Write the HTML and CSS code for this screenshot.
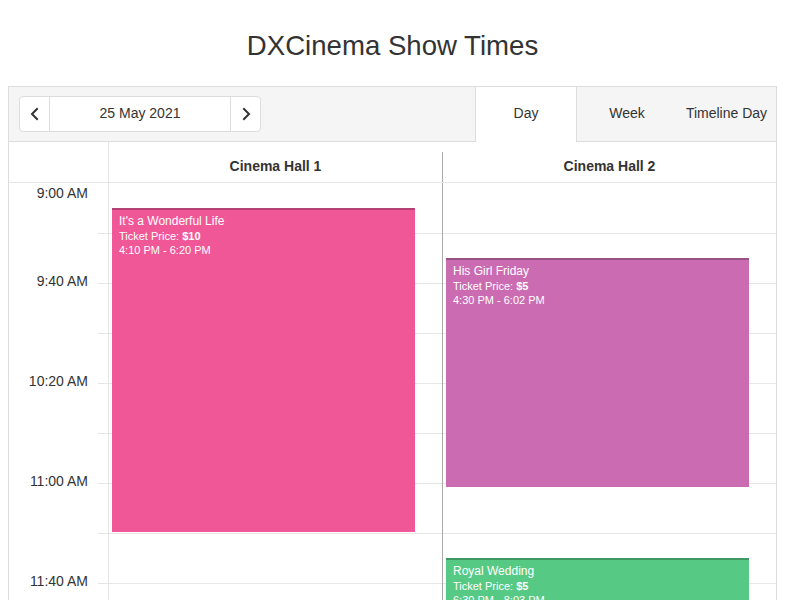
FILE: index.html
```html
<!DOCTYPE html>
<html>
<head>
<meta charset="utf-8">
<title>DXCinema Show Times</title>
<link rel="stylesheet" href="styles.css">
</head>
<body>
<h1 class="title">DXCinema Show Times</h1>
<div class="scheduler">
  <div class="toolbar">
    <div class="navigator">
      <button class="nav-btn nav-prev" aria-label="Previous">
        <svg width="12" height="14" viewBox="0 0 12 14"><path d="M8 2 L3 7 L8 12" fill="none" stroke="#333" stroke-width="2" stroke-linecap="square"/></svg>
      </button>
      <div class="nav-caption">25 May 2021</div>
      <button class="nav-btn nav-next" aria-label="Next">
        <svg width="12" height="14" viewBox="0 0 12 14"><path d="M4 2 L9 7 L4 12" fill="none" stroke="#333" stroke-width="2" stroke-linecap="square"/></svg>
      </button>
    </div>
    <div class="views">
      <div class="view view-active">Day</div>
      <div class="view">Week</div>
      <div class="view view-last">Timeline Day</div>
    </div>
  </div>
  <div class="header">
    <div class="corner"></div>
    <div class="groups">
      <div class="group">Cinema Hall 1</div>
      <div class="group group-sep">Cinema Hall 2</div>
    </div>
  </div>
  <div class="grid">
    <div class="time-panel">
      <div class="time-cell"><span class="time-label time-first">9:00 AM</span></div>
      <div class="time-cell tick"></div>
      <div class="time-cell tick"><span class="time-label">9:40 AM</span></div>
      <div class="time-cell tick"></div>
      <div class="time-cell tick"><span class="time-label">10:20 AM</span></div>
      <div class="time-cell tick"></div>
      <div class="time-cell tick"><span class="time-label">11:00 AM</span></div>
      <div class="time-cell tick"></div>
      <div class="time-cell tick"><span class="time-label">11:40 AM</span></div>
    </div>
    <div class="column">
      <div class="cell"></div><div class="cell"></div><div class="cell"></div>
      <div class="cell"></div><div class="cell"></div><div class="cell"></div>
      <div class="cell"></div><div class="cell"></div><div class="cell"></div>
      <div class="appt appt-pink" style="top:25px;height:324px">
        <div class="appt-title">It's a Wonderful Life</div>
        <div class="appt-line">Ticket Price: <b>$10</b></div>
        <div class="appt-line">4:10 PM - 6:20 PM</div>
      </div>
    </div>
    <div class="column column-sep">
      <div class="cell"></div><div class="cell"></div><div class="cell"></div>
      <div class="cell"></div><div class="cell"></div><div class="cell"></div>
      <div class="cell"></div><div class="cell"></div><div class="cell"></div>
      <div class="appt appt-purple" style="top:75px;height:229px">
        <div class="appt-title">His Girl Friday</div>
        <div class="appt-line">Ticket Price: <b>$5</b></div>
        <div class="appt-line">4:30 PM - 6:02 PM</div>
      </div>
      <div class="appt appt-green" style="top:375px;height:230px">
        <div class="appt-title">Royal Wedding</div>
        <div class="appt-line">Ticket Price: <b>$5</b></div>
        <div class="appt-line">6:30 PM - 8:03 PM</div>
      </div>
    </div>
  </div>
</div>
</body>
</html>
```

FILE: styles.css
```css
html, body {
  overflow: hidden;
}
body {
  margin: 0;
  padding: 0 8px;
  font-family: "Liberation Sans", Arial, sans-serif;
  color: #333;
  background: #fff;
}
.title {
  margin: 0;
  padding-top: 30px;
  height: 32px;
  margin-bottom: 24px;
  font-size: 27.6px;
  line-height: 32px;
  font-weight: normal;
  text-align: center;
  color: #333;
}
.scheduler {
  border: 1px solid #ddd;
  border-bottom: none;
  font-size: 14px;
}
.toolbar {
  display: flex;
  justify-content: space-between;
  height: 54px;
  background: #f5f5f5;
  border-bottom: 1px solid #ddd;
}
.navigator {
  display: flex;
  margin: 9px 0 0 10px;
  height: 34px;
  border: 1px solid #ddd;
  border-radius: 4px;
  background: #fff;
}
.nav-btn {
  width: 30px;
  padding: 0;
  margin: 0;
  border: none;
  background: transparent;
  display: flex;
  align-items: center;
  justify-content: center;
}
.nav-prev {
  border-right: 1px solid #ddd;
  border-radius: 4px 0 0 4px;
}
.nav-next {
  border-left: 1px solid #ddd;
  border-radius: 0 4px 4px 0;
}
.nav-caption {
  width: 180px;
  text-align: center;
  line-height: 32px;
  color: #333;
}
.views {
  display: flex;
  height: 55px;
}
.view {
  width: 100px;
  line-height: 52px;
  text-align: center;
  color: #333;
}
.view-last {
  width: 99px;
}
.view-active {
  background: #fff;
  border-left: 1px solid #ddd;
  border-right: 1px solid #ddd;
}
.header {
  display: flex;
  height: 40px;
  border-bottom: 1px solid #e6e6e6;
}
.corner {
  width: 99px;
  border-right: 1px solid #e6e6e6;
}
.groups {
  flex: 1;
  display: flex;
  padding-top: 10px;
}
.group {
  flex: 1 1 0;
  line-height: 28px;
  text-align: center;
  font-weight: bold;
  color: #333;
}
.group-sep {
  border-left: 1px solid #a8a8a8;
}
.grid {
  display: flex;
  height: 420px;
  overflow: hidden;
}
.time-panel {
  width: 99px;
  flex: none;
  border-right: 1px solid #e6e6e6;
}
.time-cell {
  display: flow-root;
  position: relative;
  height: 50px;
  box-sizing: border-box;
  text-align: right;
}
.tick::before {
  content: "";
  position: absolute;
  right: 0;
  top: 0;
  width: 10px;
  height: 1px;
  background: #e6e6e6;
}
.time-label {
  display: block;
  padding-right: 20px;
  margin-top: -10px;
  line-height: 16px;
  font-size: 14px;
  color: #333;
}
.time-first {
  margin-top: 2px;
}
.column {
  position: relative;
  flex: 1 1 0;
}
.column-sep {
  border-left: 1px solid #a8a8a8;
}
.cell {
  height: 50px;
  box-sizing: border-box;
}
.cell + .cell {
  border-top: 1px solid #e6e6e6;
}
.appt {
  position: absolute;
  left: 3px;
  width: 303px;
  box-sizing: border-box;
  border-top: 2px solid rgba(0, 0, 0, 0.25);
  padding: 4px 7px 0;
  color: #fff;
  overflow: hidden;
}
.appt-pink {
  background: #f05797;
}
.appt-purple {
  background: #cb6bb2;
}
.appt-green {
  background: #56ca85;
}
.appt-title {
  font-size: 12px;
  line-height: 14px;
}
.appt-line {
  font-size: 11px;
  line-height: 14px;
  margin-top: 1px;
}
.appt-line + .appt-line {
  margin-top: 0;
}
```
